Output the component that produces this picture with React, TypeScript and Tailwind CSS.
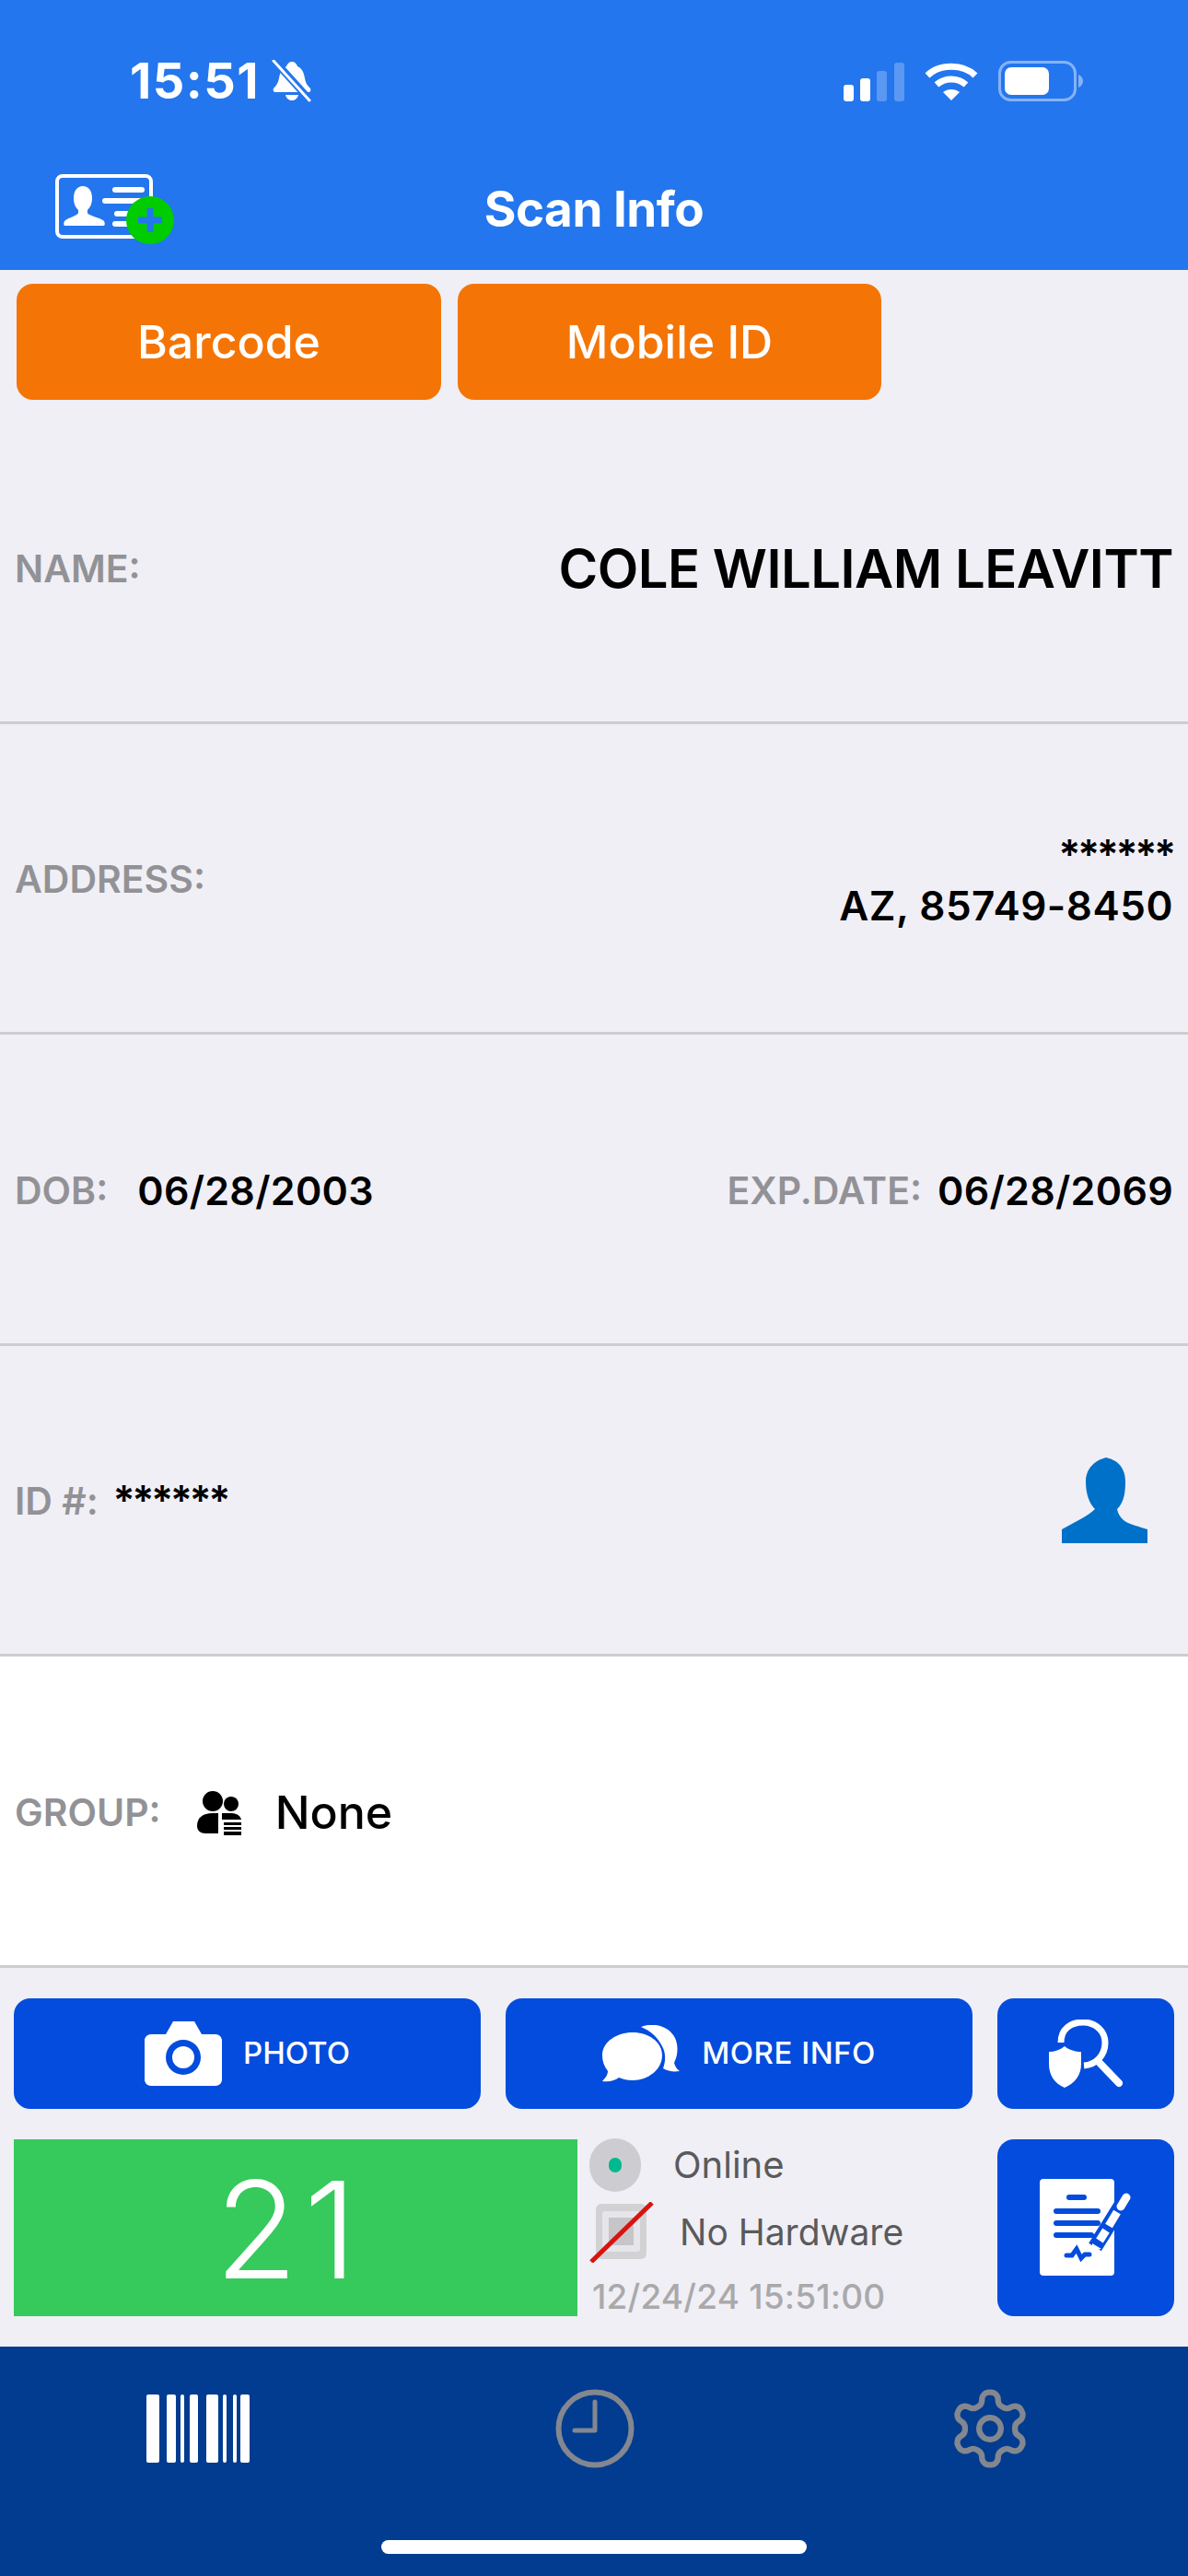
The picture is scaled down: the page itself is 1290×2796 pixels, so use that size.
function BellOff() {
  return (
    <svg width="46" height="46" viewBox="0 0 46 46" fill="none">
      <path d="M23 2c3 0 5 2 6 5 5 2 7 7 8 13 1 5 2 7 6 11 1 2 0 4-2 4H5c-2 0-3-2-2-4 3-3 5-6 6-11 1-6 3-11 8-13 1-3 3-5 6-5z" fill="white" />
      <path d="M16 38h14c-1 4-4 6-7 6s-6-2-7-6z" fill="white" />
      <path d="M4 1l38 42" stroke="#2376ee" strokeWidth="8" />
      <path d="M3 1l39 43" stroke="white" strokeWidth="3" strokeLinecap="round" />
    </svg>
  );
}

function StatusIcons() {
  return (
    <div className="flex items-end gap-[22px]">
      <svg width="66" height="42" viewBox="0 0 66 42">
        <rect x="0" y="24" width="11" height="18" rx="3" fill="white" />
        <rect x="18" y="17" width="11" height="25" rx="3" fill="white" />
        <rect x="36" y="9" width="11" height="33" rx="3" fill="white" fillOpacity="0.25" />
        <rect x="55" y="0" width="11" height="42" rx="3" fill="white" fillOpacity="0.25" />
      </svg>
      <svg width="58" height="42" viewBox="0 0 58 42" fill="none" stroke="white" strokeWidth="7">
        <path d="M3 14C16 1 42 1 55 14" />
        <path d="M13 24c9-8 23-8 32 0" />
        <path d="M29 41l-9-9c5-4 13-4 18 0z" fill="white" stroke="none" />
      </svg>
      <svg width="92" height="44" viewBox="0 0 92 44" fill="none">
        <rect x="1.5" y="1.5" width="82" height="41" rx="12" stroke="white" strokeOpacity="0.45" strokeWidth="3" />
        <rect x="7" y="7" width="48" height="30" rx="7" fill="white" />
        <path d="M87 15c3 1 5 4 5 7s-2 6-5 7z" fill="white" fillOpacity="0.45" />
      </svg>
    </div>
  );
}

function AddCard() {
  return (
    <svg width="132" height="78" viewBox="0 0 132 78" fill="none">
      <rect x="2" y="2" width="102" height="66" rx="6" stroke="white" strokeWidth="4" />
      <path d="M30 13c6 0 10 5 10 13 0 6-2 10-5 13v3c0 3 14 5 18 9 1 2 1 4 0 5H10c-1-1-1-3 0-5 4-4 15-6 15-9v-3c-3-3-5-7-5-13 0-8 4-13 10-13z" fill="white" />
      <g stroke="white" strokeWidth="6" strokeLinecap="round">
        <path d="M65 17h29" />
        <path d="M54 29h40" />
        <path d="M67 43h27" />
        <path d="M65 54h29" />
      </g>
      <circle cx="103" cy="50" r="26" fill="#00cc00" />
      <path d="M103 37v26M90 50h26" stroke="#2376ee" strokeWidth="7" />
    </svg>
  );
}

function Person() {
  return (
    <svg width="93" height="93" viewBox="0 0 93 93">
      <path d="M48 0c9 2 21 8 21 26 0 16-3 24-9 30 1 5 3 8 7 12 6 5 18 7 26 10v15H0V78c10-6 28-14 36-22-6-6-10-16-10-30C26 12 36 3 48 0z" fill="#0071c8" />
    </svg>
  );
}

function GroupIcon() {
  return (
    <svg width="48" height="48" viewBox="0 0 48 48">
      <ellipse cx="17" cy="11" rx="11" ry="11" fill="black" />
      <circle cx="37" cy="14" r="8" fill="black" />
      <path d="M0 38c0-9 6-14 17-14h6v22H9c-5 0-9-3-9-8z" fill="black" />
      <path d="M27 24h10c6 0 10 3 11 7H27z" fill="black" />
      <g fill="black">
        <rect x="29" y="34" width="19" height="3" />
        <rect x="29" y="39" width="19" height="3" />
        <rect x="29" y="44" width="19" height="4" />
      </g>
    </svg>
  );
}

function Camera() {
  return (
    <svg width="84" height="70" viewBox="0 0 84 70">
      <path d="M7 14h16l8-14h23l8 14h15c4 0 7 3 7 7v42c0 4-3 7-7 7H7c-4 0-7-3-7-7V21c0-4 3-7 7-7z" fill="white" />
      <circle cx="42" cy="39" r="19" fill="#034cdd" />
      <circle cx="42" cy="39" r="12" fill="white" />
    </svg>
  );
}

function Chat() {
  return (
    <svg width="84" height="62" viewBox="0 0 84 62">
      <path d="M42 2c12-5 30-2 37 12 4 9 3 19-1 27 1 4 3 7 6 9-7 1-13 0-18-3 3-8 3-17-1-24C60 13 52 6 42 2z" fill="white" />
      <path d="M33 8c17 0 32 10 32 25S50 60 33 60c-6 0-10-1-15-3-4 3-10 5-18 4 3-3 6-7 6-11C2 45 0 39 0 33 0 18 16 8 33 8z" fill="white" />
    </svg>
  );
}

function ShieldSearch() {
  return (
    <svg width="80" height="74" viewBox="0 0 80 74" fill="none">
      <path d="M13 25C13 10 24 3 37 3c14 0 24 10 24 22 0 14-10 24-23 25" stroke="white" strokeWidth="7" />
      <path d="M54 46l22 23" stroke="white" strokeWidth="8" strokeLinecap="round" />
      <path d="M17 29c5 4 12 6 18 6v13c0 13-7 21-18 26C6 69 0 61 0 48V35c6 0 12-2 17-6z" fill="white" />
    </svg>
  );
}

function DocSign() {
  return (
    <svg width="100" height="106" viewBox="0 0 100 106">
      <rect x="0" y="0" width="81" height="105" rx="4" fill="white" />
      <g stroke="#034cdd" strokeWidth="6" strokeLinecap="round" fill="none">
        <path d="M32 20h16" />
        <path d="M18 35h45" />
        <path d="M18 48h45" />
        <path d="M18 61h38" />
        <path d="M29 83h6l5-7 5 10 4-4h5" strokeWidth="5" />
      </g>
      <path d="M93 21L60 74" stroke="#034cdd" strokeWidth="16" />
      <path d="M94 20l-6 10" stroke="white" strokeWidth="9" strokeLinecap="round" />
      <path d="M84 36l-9 15" stroke="white" strokeWidth="9" />
      <path d="M72 56l-7 11" stroke="white" strokeWidth="9" />
      <path d="M57 70l10 6-10 2z" fill="white" />
    </svg>
  );
}

function HardwareOff() {
  return (
    <svg width="70" height="66" viewBox="0 0 70 66" fill="none">
      <rect x="7" y="2" width="55" height="60" rx="6" fill="#d2d2d5" />
      <rect x="14" y="10" width="41" height="44" rx="3" fill="#e6e6ea" />
      <rect x="21" y="17" width="27" height="30" fill="#c6c6c9" />
      <path d="M68 1L2 65" stroke="#d8140f" strokeWidth="5" />
    </svg>
  );
}

function BarcodeTab() {
  const bars = [
    [0, 14],
    [22, 10],
    [37, 4],
    [47, 9],
    [65, 13],
    [83, 4],
    [94, 4],
    [102, 10],
  ];
  return (
    <svg width="112" height="74" viewBox="0 0 112 74">
      {bars.map(([x, w]) => (
        <rect key={x} x={x} y="0" width={w} height="74" rx="2" fill="white" />
      ))}
    </svg>
  );
}

function ClockTab() {
  return (
    <svg width="86" height="86" viewBox="0 0 86 86" fill="none" stroke="#83878f">
      <circle cx="43" cy="43" r="39.5" strokeWidth="6" />
      <path d="M43 14v31H21" strokeWidth="5" strokeLinecap="round" strokeLinejoin="round" />
    </svg>
  );
}

function GearTab() {
  return (
    <svg width="86" height="86" viewBox="1.1 1.1 21.8 21.8" fill="none" stroke="#83878f" strokeWidth="1.6" strokeLinecap="round" strokeLinejoin="round">
      <path d="M12.22 2h-.44a2 2 0 0 0-2 2v.18a2 2 0 0 1-1 1.73l-.43.25a2 2 0 0 1-2 0l-.15-.08a2 2 0 0 0-2.73.73l-.22.38a2 2 0 0 0 .73 2.73l.15.1a2 2 0 0 1 1 1.72v.51a2 2 0 0 1-1 1.74l-.15.09a2 2 0 0 0-.73 2.73l.22.38a2 2 0 0 0 2.73.73l.15-.08a2 2 0 0 1 2 0l.43.25a2 2 0 0 1 1 1.73V20a2 2 0 0 0 2 2h.44a2 2 0 0 0 2-2v-.18a2 2 0 0 1 1-1.73l.43-.25a2 2 0 0 1 2 0l.15.08a2 2 0 0 0 2.73-.73l.22-.39a2 2 0 0 0-.73-2.73l-.15-.08a2 2 0 0 1-1-1.74v-.5a2 2 0 0 1 1-1.74l.15-.09a2 2 0 0 0 .73-2.73l-.22-.38a2 2 0 0 0-2.73-.73l-.15.08a2 2 0 0 1-2 0l-.43-.25a2 2 0 0 1-1-1.73V4a2 2 0 0 0-2-2z" />
      <circle cx="12" cy="12" r="3" />
    </svg>
  );
}

function Label({ children }: { children: string }) {
  return <span className="text-[41px] font-semibold text-[#929296]">{children}</span>;
}

function Row({ children, white }: { children: React.ReactNode; white?: boolean }) {
  return (
    <div className={`flex h-[337.6px] items-center justify-between border-b-[3px] border-[#cdcdd1] pt-[4px] pl-[16px] pr-[16px] ${white ? "bg-white" : ""}`}>
      {children}
    </div>
  );
}

export default function App() {
  return (
    <div className="flex h-[2796px] w-[1290px] flex-col overflow-hidden bg-[#f0eff5] font-[Inter,sans-serif]">
      <header className="h-[293px] shrink-0 bg-[#2376ee] text-white">
        <div className="flex items-center justify-between pl-[141px] pr-[114px] pt-[63px]">
          <div className="flex items-center gap-[12px]">
            <span className="text-[54px] leading-[50px] font-bold tracking-[1.5px]">15:51</span>
            <BellOff />
          </div>
          <StatusIcons />
        </div>
        <div className="relative mt-[76px] flex h-[78px] items-center justify-center">
          <div className="absolute top-0 left-[60px]">
            <AddCard />
          </div>
          <span className="text-[53px] font-bold tracking-[-0.5px]">Scan Info</span>
        </div>
      </header>

      <div className="flex h-[155px] shrink-0 gap-[18px] pt-[15px] pl-[18px]">
        <button className="h-[126px] w-[461px] rounded-[18px] bg-[#f47505] text-[50px] font-medium text-white">Barcode</button>
        <button className="h-[126px] w-[460px] rounded-[18px] bg-[#f47505] text-[50px] font-medium text-white">Mobile ID</button>
      </div>

      <Row>
        <Label>NAME:</Label>
        <span className="text-[58px] font-semibold tracking-[-0.5px] text-black">COLE WILLIAM LEAVITT</span>
      </Row>
      <Row>
        <Label>ADDRESS:</Label>
        <div className="flex flex-col items-end text-[44px] leading-[56px] font-semibold tracking-[0.5px] text-black">
          <span className="tracking-[-3px]">******</span>
          <span>AZ, 85749-8450</span>
        </div>
      </Row>
      <Row>
        <div className="flex items-center gap-[32px]">
          <Label>DOB:</Label>
          <span className="text-[43px] font-semibold tracking-[0.3px] text-black">06/28/2003</span>
        </div>
        <div className="flex items-center gap-[17px]">
          <Label>EXP.DATE:</Label>
          <span className="text-[43px] font-semibold tracking-[0.3px] text-black">06/28/2069</span>
        </div>
      </Row>
      <Row>
        <div className="flex items-center gap-[16px]">
          <Label>ID #:</Label>
          <span className="mb-[4px] text-[44px] font-semibold tracking-[-3px] text-black">******</span>
        </div>
        <div className="mr-[28px] -mt-[4px]">
          <Person />
        </div>
      </Row>
      <Row white>
        <div className="flex items-center">
          <Label>GROUP:</Label>
          <div className="ml-[39px]">
            <GroupIcon />
          </div>
          <span className="ml-[37px] text-[50px] font-medium text-black">None</span>
        </div>
      </Row>

      <div className="grid grid-cols-[507px_507px_192px] gap-x-[27px] gap-y-[33px] pt-[33px] pl-[15px]">
        <button className="flex h-[120px] items-center justify-center gap-[23px] rounded-[18px] bg-[#034cdd] text-[33px] font-medium text-white">
          <Camera />
          PHOTO
        </button>
        <button className="flex h-[120px] items-center justify-center gap-[24px] rounded-[18px] bg-[#034cdd] text-[33px] font-medium tracking-[0.5px] text-white">
          <Chat />
          MORE INFO
        </button>
        <button className="flex h-[120px] items-center justify-center rounded-[18px] bg-[#034cdd]">
          <ShieldSearch />
        </button>
        <div className="col-span-2 flex h-[192px]">
          <div className="flex w-[612px] items-center justify-center bg-[#36c95c] pt-[6px] pr-[14px] text-[146px] font-light tracking-[7px] text-white">21</div>
          <div className="-mt-[2px] flex flex-col text-[#5a5a5c]">
            <div className="flex h-[60px] items-center pl-[13px]">
              <span className="flex h-[58px] w-[56px] items-center justify-center rounded-full bg-[#cdcdd1]">
                <span className="h-[16px] w-[14px] rounded-full bg-[#00b98e]" />
              </span>
              <span className="ml-[35px] text-[40px]">Online</span>
            </div>
            <div className="mt-[10px] flex h-[72px] items-center pl-[13px]">
              <HardwareOff />
              <span className="ml-[28px] text-[39px]">No Hardware</span>
            </div>
            <span className="pt-[9px] pl-[16px] text-[37px] leading-[56px] font-medium tracking-[0.2px] text-[#a9a9ab]">12/24/24 15:51:00</span>
          </div>
        </div>
        <button className="flex h-[192px] items-center justify-center rounded-[18px] bg-[#034cdd]">
          <DocSign />
        </button>
      </div>

      <nav className="relative mt-auto flex h-[249px] shrink-0 items-start bg-[#023c90] pt-[46px]">
        <div className="flex w-[430px] justify-center pt-[6px]">
          <BarcodeTab />
        </div>
        <div className="flex w-[430px] justify-center pl-[2px]">
          <ClockTab />
        </div>
        <div className="flex w-[430px] justify-center">
          <GearTab />
        </div>
        <div className="absolute bottom-[24px] left-[414px] h-[15px] w-[462px] rounded-full bg-white" />
      </nav>
    </div>
  );
}
